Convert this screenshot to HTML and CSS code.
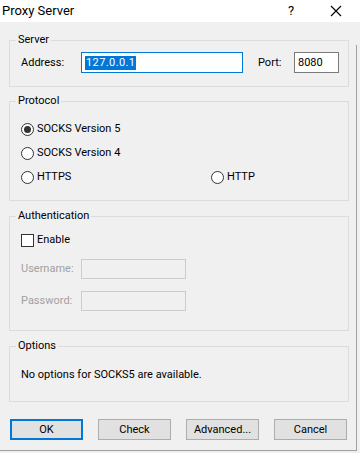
FILE: index.html
```html
<!DOCTYPE html>
<html>
<head>
<meta charset="utf-8">
<link rel="stylesheet" href="styles.css">
</head>
<body>
<div class="window">
  <div class="titlebar">
    <span class="title">Proxy Server</span>
    <span class="tb-help">?</span>
    <span class="tb-close">
      <svg width="12" height="12" viewBox="0 0 12 12"><path d="M1 1 L11 11 M11 1 L1 11" stroke="#000" stroke-width="1.1" fill="none"/></svg>
    </span>
  </div>
  <div class="content">
    <div class="group g-server">
      <span class="legend">Server</span>
      <div class="row">
        <span class="lbl lbl-addr">Address:</span>
        <span class="field field-addr focused"><span class="sel">127.0.0.1</span></span>
        <span class="lbl lbl-port">Port:</span>
        <span class="field field-port">8080</span>
      </div>
    </div>

    <div class="group g-proto">
      <span class="legend">Protocol</span>
      <div class="radios">
        <label class="opt"><span class="radio checked"></span>SOCKS Version 5</label>
        <span></span>
        <label class="opt"><span class="radio"></span>SOCKS Version 4</label>
        <span></span>
        <label class="opt"><span class="radio"></span>HTTPS</label>
        <label class="opt"><span class="radio"></span>HTTP</label>
      </div>
    </div>

    <div class="group g-auth">
      <span class="legend">Authentication</span>
      <label class="opt chk-row"><span class="checkbox"></span>Enable</label>
      <div class="row auth-row user-row">
        <span class="lbl lbl-addr disabled">Username:</span>
        <span class="field field-auth"></span>
      </div>
      <div class="row auth-row pass-row">
        <span class="lbl lbl-addr disabled">Password:</span>
        <span class="field field-auth"></span>
      </div>
    </div>

    <div class="group g-opts">
      <span class="legend">Options</span>
      <div class="opts-text">No options for SOCKS5 are available.</div>
    </div>

    <div class="buttons">
      <span class="btn default">OK</span>
      <span class="btn">Check</span>
      <span class="btn">Advanced...</span>
      <span class="btn">Cancel</span>
    </div>
  </div>
  <div class="edge-right"></div>
  <div class="edge-bottom"></div>
</div>
</body>
</html>
```

FILE: styles.css
```css
* { box-sizing: border-box; }
html, body { margin: 0; padding: 0; }
body {
  background: #f0f0f0;
  font-family: Roboto, "Noto Sans", sans-serif;
  font-size: 11px;
  color: #000;
  width: 360px;
  height: 453px;
  overflow: hidden;
}
.window { position: relative; width: 360px; height: 453px; }
.titlebar {
  height: 22px;
  background: #fff;
  display: flex;
  align-items: center;
  position: relative;
}
.title { margin-left: 2px; font-size: 13px; line-height: 22px; }
.tb-help { position: absolute; left: 288px; top: 3px; font-size: 13px; line-height: 16px; }
.tb-close { position: absolute; left: 330px; top: 5px; width: 12px; height: 12px; display: flex; }

.content { padding-left: 9px; width: 349px; }
.group {
  position: relative;
  border: 1px solid #dcdcdc;
  width: 340px;
}
.legend {
  position: absolute;
  top: -9px;
  left: 6px;
  padding: 0 2px;
  background: #f0f0f0;
  line-height: 16px;
}
.g-server { margin-top: 18px; height: 47px; padding: 11px 0 0 11px; }
.g-proto { margin-top: 14px; height: 100px; padding: 15px 0 0 11px; }
.g-auth { margin-top: 15px; height: 115px; padding: 13px 0 0 11px; }
.g-opts { margin-top: 15px; height: 56px; padding: 20px 0 0 11px; }

.row { display: flex; align-items: center; height: 21px; }
.lbl { line-height: 16px; }
.lbl-addr { width: 60px; }
.lbl-port { width: 36px; margin-left: 15px; }
.disabled { color: #a0a0a0; }
.field {
  display: flex;
  align-items: center;
  height: 21px;
  background: #fff;
  border: 1px solid #7a7a7a;
  padding-left: 3px;
  line-height: 16px;
}
.field-addr { width: 162px; }
.field.focused { border-color: #0078d7; }
.field-port { width: 45px; }
.sel { background: #0078d7; color: #fff; line-height: 14px; padding: 0 1px; letter-spacing: 0.4px; }
.field-auth { width: 105px; height: 20px; background: #f0f0f0; border-color: #cccccc; }

.radios {
  display: grid;
  grid-template-columns: 190px auto;
  grid-auto-rows: 24px;
}
.opt { display: flex; align-items: center; line-height: 16px; }
.radio {
  width: 13px; height: 13px;
  border: 1px solid #333;
  border-radius: 50%;
  background: #fff;
  margin-right: 3px;
  display: flex;
  align-items: center;
  justify-content: center;
}
.radio.checked::after {
  content: "";
  width: 7px; height: 7px;
  border-radius: 50%;
  background: #333;
}
.chk-row { height: 20px; }
.checkbox {
  width: 13px; height: 13px;
  border: 1px solid #333;
  background: #fff;
  margin-right: 3px;
}
.user-row { margin-top: 9px; height: 20px; }
.pass-row { margin-top: 12px; height: 20px; }

.opts-text { line-height: 16px; }

.buttons { display: flex; gap: 15px; padding-left: 1px; margin-top: 17px; }
.btn {
  width: 73px; height: 21px;
  background: #e1e1e1;
  border: 1px solid #adadad;
  display: flex; align-items: center; justify-content: center;
  line-height: 16px;
}
.btn.default { border: 2px solid #0078d7; }

.edge-right { position: absolute; left: 356px; top: 45px; width: 1px; height: 406px; background: #a0a0a0; }
.edge-bottom { position: absolute; left: 0; top: 450px; width: 357px; height: 1px; background: #a0a0a0; }
```
